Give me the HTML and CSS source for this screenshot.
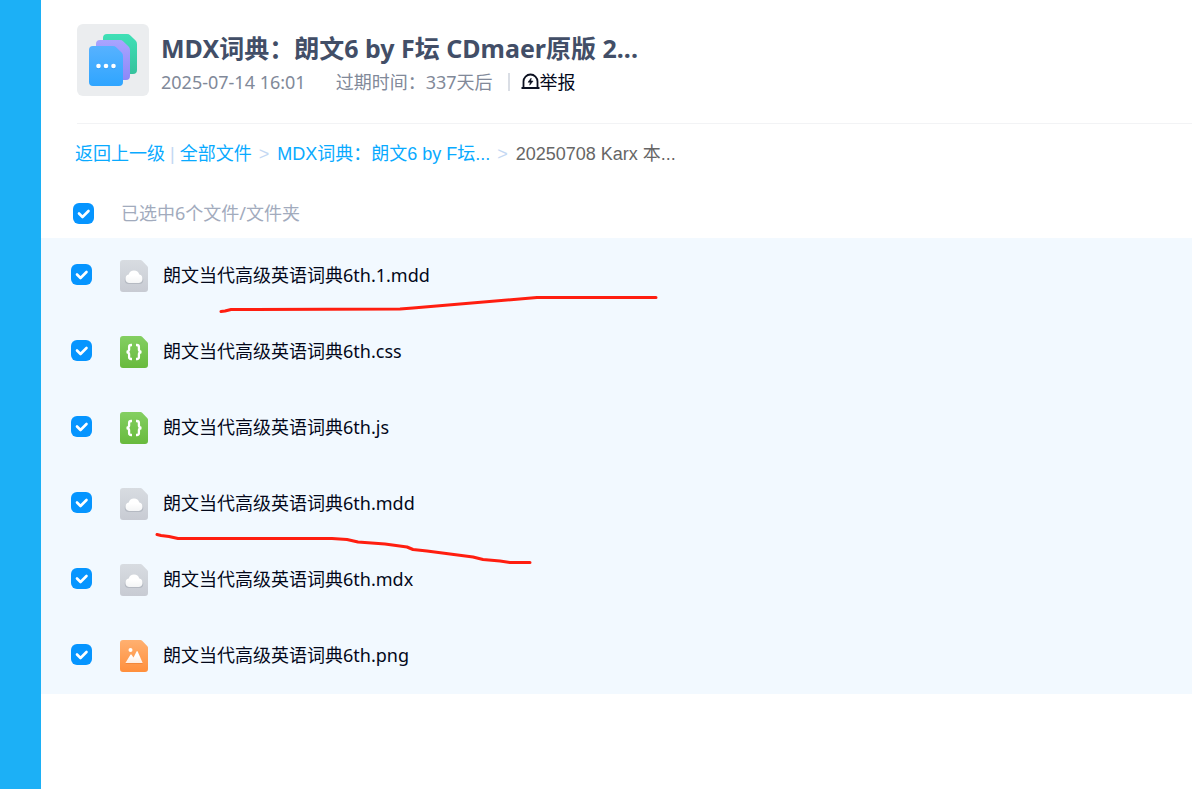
FILE: index.html
```
<!DOCTYPE html>
<html lang="zh-CN">
<head>
    <meta charset="UTF-8">
    <meta name="viewport" content="width=device-width, initial-scale=1.0">
    <title>MDX词典：朗文6 by F坛</title>
    <link rel="stylesheet" href="styles.css">
</head>
<body>
    <!-- Shared icons -->
    <svg class="icon-defs" aria-hidden="true">
        <defs>
            <linearGradient id="grayFill" x1="0" y1="0" x2="0" y2="1">
                <stop offset="0" stop-color="#d8dce1"/><stop offset="1" stop-color="#c8cbd3"/>
            </linearGradient>
            <linearGradient id="greenFill" x1="0" y1="0" x2="0" y2="1">
                <stop offset="0" stop-color="#84cf62"/><stop offset="1" stop-color="#68ba3d"/>
            </linearGradient>
            <linearGradient id="orangeFill" x1="0" y1="0" x2="0" y2="1">
                <stop offset="0" stop-color="#ffb070"/><stop offset="1" stop-color="#ff8f3c"/>
            </linearGradient>
            <linearGradient id="whiteFill" x1="0" y1="0" x2="0" y2="1">
                <stop offset="0.4" stop-color="#fff"/><stop offset="1" stop-color="#fff" stop-opacity="0.85"/>
            </linearGradient>
            <symbol id="sheet" viewBox="0 0 28 32">
                <path d="M3 0h17.500q.8 0 1.400.6l5.500 5.700q.6.600.6 1.400V29a3 3 0 0 1-3 3H3a3 3 0 0 1-3-3V3a3 3 0 0 1 3-3z"/>
            </symbol>
            <symbol id="icon-file" viewBox="0 0 28 32">
                <use href="#sheet" fill="url(#grayFill)"/>
                <path d="M9 24a4.100 4.100 0 0 1-.3-8.200 5.400 5.400 0 0 1 10.600 0A4.100 4.100 0 0 1 19 24z" fill="#9da3ad" opacity="0.5"/>
                <path d="M9 23a4.300 4.300 0 0 1-.3-8.400 5.500 5.500 0 0 1 10.600 0A4.300 4.300 0 0 1 19 23z" fill="url(#whiteFill)"/>
            </symbol>
            <symbol id="icon-code" viewBox="0 0 28 32">
                <use href="#sheet" fill="url(#greenFill)"/>
                <path d="M12 9h-.9q-2 0-2 2v2.600q0 1.900-2.400 2.400 2.400.5 2.400 2.400V21q0 2 2 2h.9M16 9h.9q2 0 2 2v2.600q0 1.900 2.400 2.400-2.400.5-2.400 2.400V21q0 2-2 2H16" fill="none" stroke="#fff" stroke-width="2.300"/>
            </symbol>
            <symbol id="icon-image" viewBox="0 0 28 32">
                <use href="#sheet" fill="url(#orangeFill)"/>
                <path d="M5.400 24l5-8.800q.6-.9 1.200 0l1.900 2.900 3-6q.6-1.100 1.200 0L22.700 24z" fill="#d9681e" opacity="0.35"/>
                <circle cx="10.500" cy="10" r="2" fill="#fff"/>
                <path d="M5.400 23l5-8.300q.6-.9 1.200 0l1.900 2.800 3-5.900q.6-1.100 1.200 0L22.700 23z" fill="url(#whiteFill)"/>
            </symbol>
        </defs>
    </svg>

    <main class="share">
        <header class="share-header">
            <div class="share-cover">
                <svg width="72" height="72" viewBox="0 0 72 72" aria-hidden="true">
                    <defs>
                        <linearGradient id="backFill" x1="0" y1="0" x2="0" y2="1">
                            <stop offset="0" stop-color="#3fe0b6"/><stop offset="1" stop-color="#36c29d"/>
                        </linearGradient>
                        <linearGradient id="midFill" x1="0" y1="0" x2="0" y2="1">
                            <stop offset="0" stop-color="#a9a4ff"/><stop offset="1" stop-color="#8c88f8"/>
                        </linearGradient>
                        <linearGradient id="frontFill" x1="0" y1="0" x2="0" y2="1">
                            <stop offset="0" stop-color="#57b2ff"/><stop offset="1" stop-color="#2fa5ff"/>
                        </linearGradient>
                    </defs>
                    <path d="M30 10h20q2 0 3.400 1.400l5.200 5.200Q60 18 60 20v26q0 4-4 4H30q-4 0-4-4V14q0-4 4-4z" fill="url(#backFill)"/>
                    <path d="M23 16h20q2 0 3.400 1.400l5.200 5.200Q53 24 53 26v26q0 4-4 4H23q-4 0-4-4V20q0-4 4-4z" fill="url(#midFill)"/>
                    <path d="M16 22h20q2 0 3.400 1.400l5.200 5.200Q46 30 46 32v26q0 4-4 4H16q-4 0-4-4V26q0-4 4-4z" fill="url(#frontFill)"/>
                    <g fill="#1d7fe0" opacity="0.35"><circle cx="21.500" cy="43" r="2.300"/><circle cx="29" cy="43" r="2.300"/><circle cx="36.500" cy="43" r="2.300"/></g>
                    <g fill="#fff"><circle cx="21.500" cy="42" r="2.300"/><circle cx="29" cy="42" r="2.300"/><circle cx="36.500" cy="42" r="2.300"/></g>
                </svg>
            </div>
            <div class="share-info">
                <h1>MDX词典：朗文6 by F坛 CDmaer原版 2...</h1>
                <div class="share-meta">
                    <span>2025-07-14 16:01</span>
                    <span class="expire">过期时间：337天后</span>
                    <button type="button" class="report">
                        <svg width="19" height="18" viewBox="0 0 19 18" aria-hidden="true">
                            <path d="M2.500 15V8.500a7 7 0 0 1 14 0V15M.5 15h18" fill="none" stroke="#0b1020" stroke-width="1.800"/>
                            <path d="M10.200 5L7 9.200h2.200L8.700 12.200l3.400-4.200H9.900z" fill="#0b1020" stroke="#0b1020" stroke-width=".5"/>
                        </svg>举报
                    </button>
                </div>
            </div>
        </header>

        <nav class="breadcrumb" aria-label="路径">
            <a href="#">返回上一级</a>
            <span class="bar">|</span>
            <a href="#">全部文件</a>
            <span class="arrow">&gt;</span>
            <a href="#">MDX词典：朗文6 by F坛...</a>
            <span class="arrow">&gt;</span>
            <span class="current">20250708 Karx 本...</span>
        </nav>

        <div class="select-all">
            <input type="checkbox" id="checkAll" checked>
            <label for="checkAll">已选中6个文件/文件夹</label>
        </div>

        <div class="file-area">
            <ul class="file-list">
                <li>
                    <input type="checkbox" id="file1" checked>
                    <svg class="file-icon" aria-hidden="true"><use href="#icon-file"/></svg>
                    <label for="file1">朗文当代高级英语词典6th.1.mdd</label>
                </li>
                <li>
                    <input type="checkbox" id="file2" checked>
                    <svg class="file-icon" aria-hidden="true"><use href="#icon-code"/></svg>
                    <label for="file2">朗文当代高级英语词典6th.css</label>
                </li>
                <li>
                    <input type="checkbox" id="file3" checked>
                    <svg class="file-icon" aria-hidden="true"><use href="#icon-code"/></svg>
                    <label for="file3">朗文当代高级英语词典6th.js</label>
                </li>
                <li>
                    <input type="checkbox" id="file4" checked>
                    <svg class="file-icon" aria-hidden="true"><use href="#icon-file"/></svg>
                    <label for="file4">朗文当代高级英语词典6th.mdd</label>
                </li>
                <li>
                    <input type="checkbox" id="file5" checked>
                    <svg class="file-icon" aria-hidden="true"><use href="#icon-file"/></svg>
                    <label for="file5">朗文当代高级英语词典6th.mdx</label>
                </li>
                <li>
                    <input type="checkbox" id="file6" checked>
                    <svg class="file-icon" aria-hidden="true"><use href="#icon-image"/></svg>
                    <label for="file6">朗文当代高级英语词典6th.png</label>
                </li>
            </ul>
            <!-- Hand-drawn red marks over the list -->
            <svg class="marks" width="620" height="340" viewBox="0 0 620 340" aria-hidden="true">
                <path d="M180 73.500L184 73 190 71.500 359 71 372 70 496 59.500H615"/>
                <path d="M116 296.500L120 297.500 128 298.500 137 300.500H291L306 301.500 317 304 344 306 366 309 372 311.500 386 313 432 319 442 321.500 459 323 469 324.500H489"/>
            </svg>
        </div>
    </main>
</body>
</html>
```

FILE: styles.css
```
* {
    box-sizing: border-box;
}

body {
    margin: 0;
    min-height: 100vh;
    padding-left: 41px;
    background-color: #1cb0f6;
    font-family: "Noto Sans", "Noto Sans CJK SC", sans-serif;
    font-size: 18px;
    line-height: 24px;
    color: #03081a;
}

.icon-defs {
    position: absolute;
    width: 0;
    height: 0;
}

.share {
    min-height: 100vh;
    background-color: #fff;
}

/* Header */
.share-header {
    display: flex;
    gap: 12px;
    margin-left: 36px;
    padding: 24px 0 23px;
    border-bottom: 1px solid #f2f3f5;
}

.share-cover {
    flex: none;
    height: 72px;
    border-radius: 6px;
    background-color: #ebedef;
}

.share-info {
    min-width: 0;
    padding-top: 8px;
}

.share-info h1 {
    margin: 0;
    font-size: 25px;
    line-height: 32px;
    font-weight: 700;
    color: #424e67;
    white-space: nowrap;
}

.share-meta {
    display: flex;
    align-items: center;
    height: 36px;
    color: #818999;
    white-space: nowrap;
}

.expire {
    margin-left: 30px;
}

.report {
    display: flex;
    align-items: center;
    height: 18px;
    margin: 0 0 0 15px;
    padding: 0 0 0 11px;
    border: 0;
    border-left: 2px solid #dadee5;
    background: none;
    font: inherit;
    color: #03081a;
    cursor: pointer;
}

/* Breadcrumb */
.breadcrumb {
    display: flex;
    padding: 18px 0 0 34px;
    font-family: "Liberation Sans", "Noto Sans CJK SC", sans-serif;
    white-space: nowrap;
}

.breadcrumb a {
    color: #09aaff;
    text-decoration: none;
}

.bar,
.arrow {
    color: #c4d8f3;
}

.bar {
    margin: 0 5px;
}

.arrow {
    margin: 0 8px 0 7px;
}

.current {
    color: #666;
}

/* Checkboxes */
input[type="checkbox"] {
    appearance: none;
    flex: none;
    width: 21px;
    height: 21px;
    margin: 0;
    border: 1px solid #c4d8f3;
    border-radius: 6px;
    cursor: pointer;
}

input[type="checkbox"]:checked {
    border: 0;
    background: #0695ff url("data:image/svg+xml,%3Csvg xmlns='http://www.w3.org/2000/svg' viewBox='0 0 21 21'%3E%3Cpath d='M6 10.500l3.500 3.500 6-6' fill='none' stroke='%23fff' stroke-width='2.600' stroke-linecap='round' stroke-linejoin='round'/%3E%3C/svg%3E");
}

.select-all {
    display: flex;
    align-items: center;
    gap: 27px;
    height: 50px;
    margin-top: 22px;
    padding-left: 32px;
    color: #a2abbd;
}

/* File list */
.file-area {
    position: relative;
}

.file-list {
    margin: 0;
    padding: 0;
    list-style: none;
    background-color: #f2f9ff;
}

.file-list li {
    display: flex;
    align-items: center;
    height: 76px;
    padding-left: 30px;
}

.file-list input[type="checkbox"] {
    margin-bottom: 4px;
}

.file-list label {
    padding-bottom: 2px;
}

.file-icon {
    flex: none;
    width: 28px;
    height: 32px;
    margin: 0 15px 0 28px;
}

.marks {
    position: absolute;
    top: 0;
    left: 0;
    fill: none;
    stroke: #ff1e10;
    stroke-width: 3;
    stroke-linecap: round;
    stroke-linejoin: round;
    pointer-events: none;
}
```
